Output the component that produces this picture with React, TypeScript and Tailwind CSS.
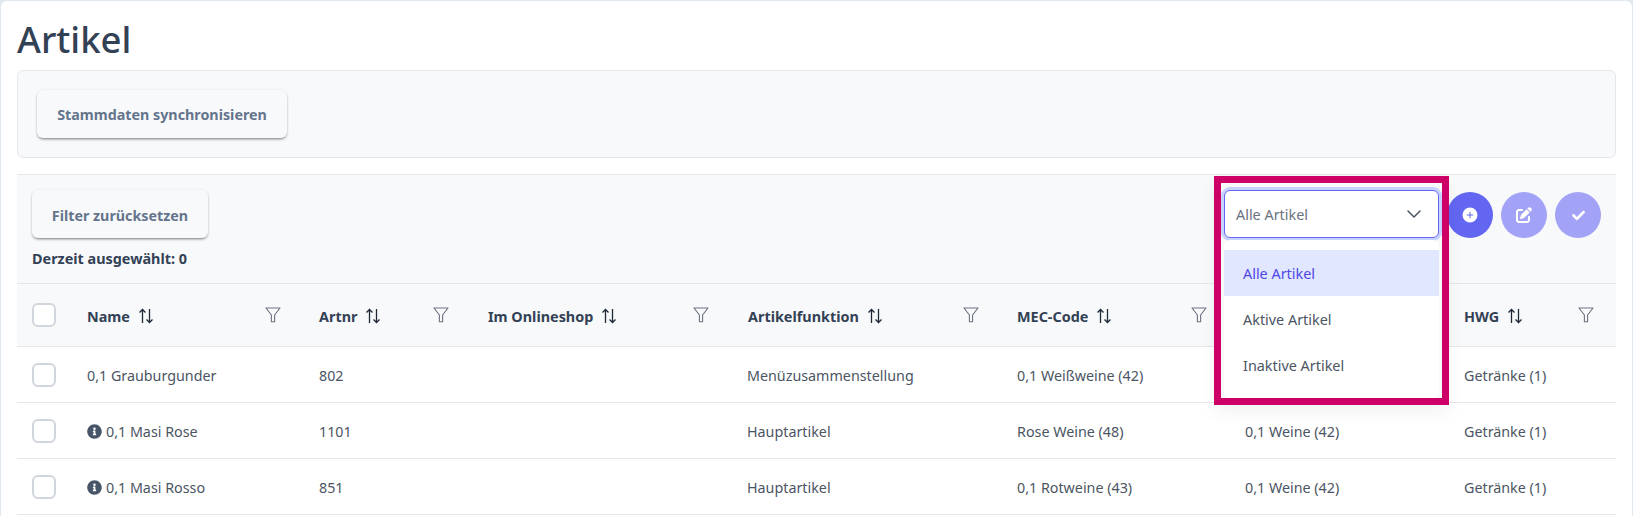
import { ChevronDown } from 'lucide-react';
import { FaInfoCircle, FaCheck } from 'react-icons/fa';
import { FaPenToSquare } from 'react-icons/fa6';

type Row = { name: string; info?: boolean; nr: string; fn: string; mec: string; wg: string; hwg: string };

// the first row's Warengruppe value sits behind the open dropdown
const rows: Row[] = [
  { name: '0,1 Grauburgunder', nr: '802', fn: 'Menüzusammenstellung', mec: '0,1 Weißweine (42)', wg: '', hwg: 'Getränke (1)' },
  { name: '0,1 Masi Rose', info: true, nr: '1101', fn: 'Hauptartikel', mec: 'Rose Weine (48)', wg: '0,1 Weine (42)', hwg: 'Getränke (1)' },
  { name: '0,1 Masi Rosso', info: true, nr: '851', fn: 'Hauptartikel', mec: '0,1 Rotweine (43)', wg: '0,1 Weine (42)', hwg: 'Getränke (1)' },
];

const headers = [
  { label: 'Name', pl: 'pl-[15px]' },
  { label: 'Artnr', pl: 'pl-4' },
  { label: 'Im Onlineshop', pl: 'pl-[17px]' },
  { label: 'Artikelfunktion', pl: 'pl-[17px]' },
  { label: 'MEC-Code', pl: 'pl-4' },
  { label: '', pl: 'pl-4' },
  { label: 'HWG', pl: 'pl-4' },
];

const gridCols = 'grid grid-cols-[55px_231px_168px_260px_270px_228px_219px_168px]';

function SortIcon() {
  return (
    <svg width="16" height="16" viewBox="0 0 16 16" fill="none" stroke="#1f2937" strokeWidth="1.3" className="ml-2 shrink-0 mt-[2px]">
      <path d="M4.5 15V1.5M1.5 4.5l3-3 3 3" />
      <path d="M11.5 1v13.5M8.5 11.5l3 3 3-3" />
    </svg>
  );
}

function FilterIcon() {
  return (
    <svg width="16" height="16" viewBox="0 0 16 16" fill="none" stroke="#6b7280" strokeWidth="1.1" strokeLinejoin="round">
      <path d="M1 1h14L9.6 8v6.8H6.4V8z" />
    </svg>
  );
}

function PlusCircle() {
  return (
    <svg width="16" height="16" viewBox="0 0 16 16">
      <circle cx="8" cy="8" r="7.5" fill="#fff" />
      <path d="M8 4.8v6.4M4.8 8h6.4" stroke="#6366f1" strokeWidth="1" />
    </svg>
  );
}

function Checkbox() {
  return <div className="w-6 h-6 rounded-md border-2 border-gray-300 bg-white" />;
}

export default function App() {
  return (
    <div className="bg-[#e2e8f0] pl-px pt-px h-[516px] overflow-hidden font-['Noto_Sans',sans-serif]">
      <div className="bg-white rounded-t-md h-full w-[1631px] pl-4 pr-4 overflow-hidden">
        <h1 className="text-[36.5px] leading-[50px] font-medium text-[#334155] mt-[13px] mb-[6px]">Artikel</h1>

        <div className="bg-[#f8f9fb] border border-gray-200 rounded-md h-[88px] pl-[19px] pt-[19px]">
          <button className="h-12 w-[250px] pt-[2px] rounded-md bg-[#f8f9fb] text-[14.3px] font-bold text-[#64748b] shadow-[0_2px_3px_-1px_rgba(0,0,0,0.5),0_0_3px_rgba(0,0,0,0.08)]">
            Stammdaten synchronisieren
          </button>
        </div>

        <div className="relative mt-[16px] bg-[#f8f9fb] border-t border-b border-gray-200 h-[110px] pl-[15px] pr-[15px] pt-[15px] flex justify-between">
          <div>
            <button className="h-12 w-[176px] pt-[3px] rounded-md bg-[#f8f9fb] text-[14.3px] font-bold text-[#64748b] shadow-[0_2px_3px_-1px_rgba(0,0,0,0.5),0_0_3px_rgba(0,0,0,0.08)]">
              Filter zurücksetzen
            </button>
            <div className="mt-[10px] text-[14.4px] font-bold text-[#334155]">Derzeit ausgewählt: 0</div>
          </div>

          <div className="flex items-start gap-2 pt-[2px]">
            <button className="w-[46px] h-[46px] rounded-full bg-[#6366f1] flex items-center justify-center">
              <PlusCircle />
            </button>
            <button className="w-[46px] h-[46px] rounded-full bg-[#a2a3f6] text-white flex items-center justify-center">
              <FaPenToSquare size={16} />
            </button>
            <button className="w-[46px] h-[46px] rounded-full bg-[#a2a3f6] text-white flex items-center justify-center">
              <FaCheck size={13} />
            </button>
          </div>
        </div>

        <div className={`${gridCols} h-[63px] bg-[#f8f9fb] border-b border-gray-200 items-center`}>
          <div className="pl-[15px]">
            <Checkbox />
          </div>
          {headers.map((h, i) => (
            <div key={i} className={`flex items-center ${h.pl} pr-[22px] text-[14.4px] font-bold text-[#334155]`}>
              {h.label && (
                <>
                  <span className="pt-[3px]">{h.label}</span>
                  <SortIcon />
                </>
              )}
              <div className="ml-auto">
                <FilterIcon />
              </div>
            </div>
          ))}
        </div>

        {rows.map((r) => (
          <div key={r.nr} className={`${gridCols} h-[56px] border-b border-gray-200 items-center text-[14.3px] text-[#4b5563]`}>
            <div className="pl-[15px]">
              <Checkbox />
            </div>
            <div className="pl-[15px] pt-[3px] flex items-center gap-[4px]">
              {r.info && <FaInfoCircle size={15} className="text-[#475569] -mt-[1px]" />}
              {r.name}
            </div>
            <div className="pl-4 pt-[3px]">{r.nr}</div>
            <div />
            <div className="pl-4 pt-[3px]">{r.fn}</div>
            <div className="pl-4 pt-[3px]">{r.mec}</div>
            <div className="pl-4 pt-[3px]">{r.wg}</div>
            <div className="pl-4 pt-[3px]">{r.hwg}</div>
          </div>
        ))}
      </div>

      {/* open dropdown with the highlight frame on top */}
      <div className="absolute left-[1214px] top-[176px] w-[235px] h-[229px] border-[7px] border-[#cc0066] bg-[#f8f9fb] p-[3px] pt-[7px] shadow-[0_8px_16px_rgba(0,0,0,0.05)]">
        <div className="w-[215px] h-12 bg-white border border-[#6366f1] rounded-md ring-[3px] ring-[#c7d2fe] flex items-center justify-between pl-[11px] pr-[12px] text-[14.4px] text-[#6b7280]">
          <span className="pt-[2px]">Alle Artikel</span>
          <ChevronDown size={24} strokeWidth={1.5} className="text-[#4b5563]" />
        </div>
        <div className="mt-[2px] w-[215px] bg-white rounded-md py-[10px] text-[14.4px] text-[#4b5563] h-[158px]">
          <div className="h-[46px] flex items-center pl-[19px] pt-[2px] bg-[#e0e7ff] text-[#4f46e5]">Alle Artikel</div>
          <div className="h-[46px] flex items-center pl-[19px] pt-[2px]">Aktive Artikel</div>
          <div className="h-[46px] flex items-center pl-[19px] pt-[2px]">Inaktive Artikel</div>
        </div>
      </div>
    </div>
  );
}
